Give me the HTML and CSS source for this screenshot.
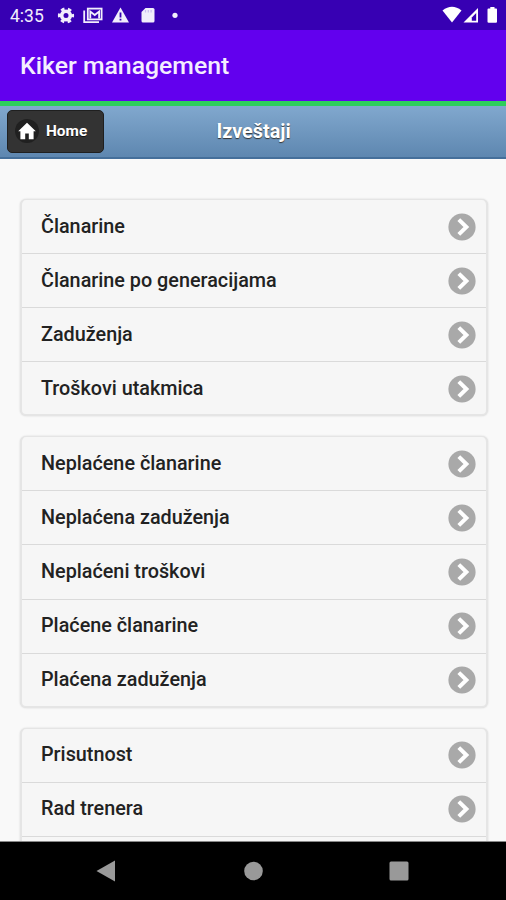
FILE: index.html
```html
<!DOCTYPE html>
<html lang="sr">
<head>
    <meta charset="UTF-8">
    <meta name="viewport" content="width=device-width, initial-scale=1.0">
    <title>Kiker management</title>
    <link rel="stylesheet" href="styles.css">
</head>
<body>
    <svg class="defs" width="0" height="0">
        <symbol id="carat" viewBox="0 0 28 28">
            <circle cx="14" cy="14" r="13.6" fill="#a9a9a9"/>
            <path d="M10.8 6.6 L18.4 14 L10.8 21.4" fill="none" stroke="#fff" stroke-width="4"/>
        </symbol>
    </svg>

    <div class="status-bar">
        <span class="clock">4:35</span>
        <svg class="status-icons" width="130" height="30" viewBox="0 0 130 30">
            <g fill="none" stroke="#f1eefc">
                <circle cx="12" cy="15.5" r="4.3" stroke-width="3.6"/>
                <circle cx="12" cy="15.5" r="6.6" stroke-width="3" stroke-dasharray="3.5 3.41" stroke-dashoffset="1.75"/>
                <path d="M30.2 10.5 V22.2 H45" stroke-width="1.8"/>
                <rect x="33.8" y="8.6" width="13.8" height="10.8" stroke-width="1.8"/>
                <path d="M36.3 18.5 V11.5 L40.7 15 L45.1 11.5 V18.5" stroke-width="1.8"/>
            </g>
            <path d="M66.5 7.5 L75 22.5 H58 Z" fill="#f1eefc"/>
            <path d="M66.5 12.5 V17.4 M66.5 18.8 V20.6" stroke="#3700b3" stroke-width="1.8"/>
            <path d="M91.5 8 H99 Q100.5 8 100.5 9.5 V21 Q100.5 22.5 99 22.5 H89 Q87.5 22.5 87.5 21 V12 Z" fill="#f1eefc"/>
            <path d="M91.5 10 V12.5 M94.3 10 V12.5 M97.1 10 V12.5" stroke="#c9bdf0" stroke-width="1.2"/>
            <circle cx="121" cy="15.3" r="2.6" fill="#f1eefc"/>
        </svg>
        <svg class="signal-icons" width="60" height="30" viewBox="0 0 60 30">
            <path d="M-2.5 10.5 Q7 3 16.5 10.5 L7 22.5 Z" fill="#fff"/>
            <path d="M18.5 22.5 L33 8 V22.5 Z" fill="#fff"/>
            <path d="M26.8 17.5 L31.2 13 V20.8 H26.8 Z" fill="#3700b3"/>
            <path d="M43.5 8.5 H45.3 V7 H49.5 V8.5 H51.3 Q52 8.5 52 9.5 V21.8 Q52 22.8 51 22.8 H43.8 Q42.5 22.8 42.5 21.8 V9.5 Q42.5 8.5 43.5 8.5 Z" fill="#fff"/>
        </svg>
    </div>

    <div class="app-bar">
        <h1>Kiker management</h1>
    </div>

    <div class="header">
        <a class="home-btn" href="#">
            <svg width="24" height="24" viewBox="0 0 24 24">
                <circle cx="12" cy="12" r="12" fill="#202020"/>
                <path d="M12 3.8 L20.8 12.2 H18.6 V20.3 H13.8 V14.5 H10.2 V20.3 H5.4 V12.2 H3.2 Z" fill="#fff"/>
            </svg>
            <span>Home</span>
        </a>
        <h2>Izveštaji</h2>
    </div>

    <div class="content">
        <ul class="listview">
            <li><a href="#"><span>Članarine</span><svg><use href="#carat"/></svg></a></li>
            <li><a href="#"><span>Članarine po generacijama</span><svg><use href="#carat"/></svg></a></li>
            <li><a href="#"><span>Zaduženja</span><svg><use href="#carat"/></svg></a></li>
            <li><a href="#"><span>Troškovi utakmica</span><svg><use href="#carat"/></svg></a></li>
        </ul>
        <ul class="listview">
            <li><a href="#"><span>Neplaćene članarine</span><svg><use href="#carat"/></svg></a></li>
            <li><a href="#"><span>Neplaćena zaduženja</span><svg><use href="#carat"/></svg></a></li>
            <li><a href="#"><span>Neplaćeni troškovi</span><svg><use href="#carat"/></svg></a></li>
            <li><a href="#"><span>Plaćene članarine</span><svg><use href="#carat"/></svg></a></li>
            <li><a href="#"><span>Plaćena zaduženja</span><svg><use href="#carat"/></svg></a></li>
        </ul>
        <ul class="listview">
            <li><a href="#"><span>Prisutnost</span><svg><use href="#carat"/></svg></a></li>
            <li><a href="#"><span>Rad trenera</span><svg><use href="#carat"/></svg></a></li>
            <li></li>
        </ul>
    </div>

    <div class="nav-bar">
        <svg width="506" height="58" viewBox="0 0 506 58">
            <g fill="#999">
                <path d="M96.5 29 L115 18.5 V39.5 Z"/>
                <circle cx="253.5" cy="29" r="9.3"/>
                <rect x="389.5" y="19.5" width="19" height="19" rx="1.5"/>
            </g>
        </svg>
    </div>
</body>
</html>
```
FILE: styles.css
```css
* {
    box-sizing: border-box;
}
body {
    font-family: Roboto, "Liberation Sans", sans-serif;
    margin: 0;
    height: 900px;
    display: flex;
    flex-direction: column;
    overflow: hidden;
    background-color: #f9f9f9;
    color: #222;
}
h1, h2, ul {
    margin: 0;
    padding: 0;
}
a {
    color: inherit;
    text-decoration: none;
}
.defs {
    position: absolute;
}
.status-bar {
    height: 30px;
    flex: none;
    display: flex;
    background-color: #3700b3;
    color: #f1eefc;
}
.clock {
    width: 54px;
    padding-left: 10px;
    font-size: 17.5px;
    line-height: 32px;
}
.signal-icons {
    margin-left: auto;
    margin-right: 1px;
    overflow: visible;
}
.app-bar {
    height: 71px;
    flex: none;
    display: flex;
    align-items: center;
    padding-left: 20px;
    background-color: #6200ee;
}
.app-bar h1 {
    color: #f4edff;
    font-size: 24.8px;
    font-weight: 500;
    line-height: 30px;
}
.header {
    height: 58px;
    flex: none;
    display: grid;
    grid-template-columns: 97px 1fr 97px;
    align-items: center;
    padding: 0 6px 1px 7px;
    border-top: 5px solid #2dce5c;
    border-bottom: 2px solid #456f9a;
    background: linear-gradient(#81a8ce, #5e87b0);
}
.home-btn {
    height: 43px;
    display: flex;
    align-items: center;
    gap: 7px;
    padding-left: 7px;
    border: 1px solid #1f1f1f;
    border-radius: 5px;
    background-color: #333;
    color: #fff;
    font-size: 15.4px;
    font-weight: 700;
    text-shadow: 0 1px 0 #111;
}
.header h2 {
    color: #fff;
    font-size: 19.8px;
    font-weight: 700;
    text-align: center;
    text-shadow: 0 1px 1px #333;
}
.content {
    flex: 1;
    min-height: 0;
    overflow: hidden;
    padding: 40px 18px 0 20px;
    border-bottom: 1px solid #888;
}
.listview {
    list-style: none;
    margin-bottom: 20px;
    border: 2px solid #e5e5e5;
    border-top-width: 1px;
    border-radius: 6px;
    background-color: #f6f6f6;
    box-shadow: 0 0 2px rgba(0, 0, 0, 0.15);
    overflow: hidden;
}
.listview li {
    height: 54.1px;
    border-bottom: 1px solid #dadada;
}
.listview li:last-child {
    height: 52px;
    border-bottom: none;
}
.listview a {
    height: 53px;
    display: flex;
    align-items: center;
    justify-content: space-between;
    padding: 0 10px 0 19px;
    font-size: 19.8px;
    font-weight: 500;
}
.listview span {
    padding-bottom: 1px;
}
.listview svg {
    width: 28px;
    height: 28px;
}
.nav-bar {
    height: 58px;
    flex: none;
    background-color: #000;
}
```
